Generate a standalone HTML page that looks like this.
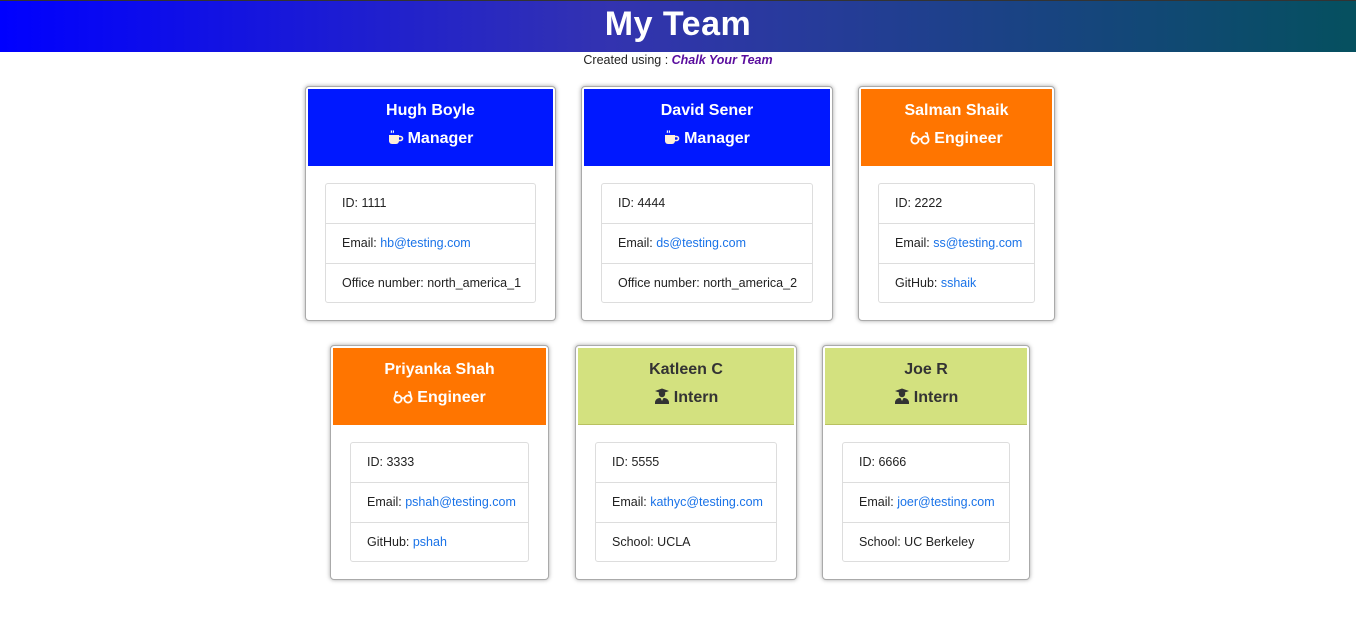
<!DOCTYPE html>
<html><head><style>
*{box-sizing:border-box;margin:0;padding:0}
body{width:1356px;height:618px;background:#fff;font-family:"Liberation Sans",sans-serif;position:relative;overflow:hidden}
.top{position:absolute;left:0;top:0;width:1356px;height:52px;background:linear-gradient(90deg,#0000ff 0%,#3333b0 45%,#05505f 100%);border-top:1px solid #333}
.top h1{text-align:center;color:#fff;font-size:34px;line-height:46px;font-weight:bold;letter-spacing:0.5px}
.sub{position:absolute;top:53px;left:0;width:1356px;text-align:center;font-size:12.5px;line-height:15px;color:#222}
.sub b{color:#5a0e9e;font-style:italic;font-weight:900}
.card{position:absolute;height:235px;border:1px solid #aaa;border-radius:4px;box-shadow:0 0 4px rgba(0,0,0,.35);padding:2px;background:#fff}
.hd{height:77px;text-align:center;color:#fff;font-family:"Liberation Sans",sans-serif;font-weight:bold;font-size:16px;padding-top:8px;line-height:28px}
.hd svg{vertical-align:-2px;margin-right:4px}
.m{background:#0018ff}.e{background:#ff7500}.i{background:#d3e17f;color:#333;border-bottom:1px solid #b8c160}
.ls{position:absolute;left:19px;right:19px;top:96px;border:1px solid #ddd;border-radius:3px;font-size:12.5px;color:#222}
.ls div{height:39.3px;line-height:39px;padding-left:16px;border-top:1px solid #ddd;white-space:nowrap}
.ls div:first-child{border-top:none}
.ls a{color:#1a73e8;text-decoration:none}
</style></head><body>
<div class="top"><h1>My Team</h1></div>
<div class="sub">Created using : <b>Chalk Your Team</b></div>
<svg width="0" height="0" style="position:absolute">
<defs>
<symbol id="mug" viewBox="0 0 16 16"><path d="M3 1.5q1 1.2 0 2.4M5 1.5q1 1.2 0 2.4" stroke="#fff" stroke-width="1" fill="none"/><path d="M1 6h10v6a3 3 0 0 1-3 3H4a3 3 0 0 1-3-3z" fill="#fdeed9"/><path d="M11 7.5h1.5a2 2 0 0 1 0 4H11" stroke="#fdeed9" stroke-width="1.6" fill="none"/></symbol>
<symbol id="gl" viewBox="0 0 20 14"><circle cx="5" cy="9" r="3.6" stroke="#fff" stroke-width="1.8" fill="none"/><circle cx="15" cy="9" r="3.6" stroke="#fff" stroke-width="1.8" fill="none"/><path d="M8.5 8h3M1.5 8.5L3 2h2M18.5 8.5L17 2h-2" stroke="#fff" stroke-width="1.6" fill="none"/></symbol>
<symbol id="gr" viewBox="0 0 16 16"><path d="M1 3L8 0.5 15 3 8 5.5z" fill="#333"/><circle cx="8" cy="6" r="3.2" fill="#333"/><path d="M1 16v-1.5a4.5 4.5 0 0 1 4.5-4.5h5a4.5 4.5 0 0 1 4.5 4.5V16z" fill="#333"/><path d="M6.5 10l1.5 3 1.5-3" fill="#d3e17f"/></symbol>
</defs></svg>

<div class="card" style="left:305px;top:86px;width:251px"><div class="hd m">Hugh Boyle<br><svg width="16" height="16"><use href="#mug"/></svg>Manager</div><div class="ls"><div>ID: 1111</div><div>Email: <a>hb@testing.com</a></div><div>Office number: north_america_1</div></div></div>
<div class="card" style="left:581px;top:86px;width:252px"><div class="hd m">David Sener<br><svg width="16" height="16"><use href="#mug"/></svg>Manager</div><div class="ls"><div>ID: 4444</div><div>Email: <a>ds@testing.com</a></div><div>Office number: north_america_2</div></div></div>
<div class="card" style="left:858px;top:86px;width:197px"><div class="hd e">Salman Shaik<br><svg width="20" height="14"><use href="#gl"/></svg>Engineer</div><div class="ls"><div>ID: 2222</div><div>Email: <a>ss@testing.com</a></div><div>GitHub: <a>sshaik</a></div></div></div>

<div class="card" style="left:330px;top:345px;width:219px"><div class="hd e">Priyanka Shah<br><svg width="20" height="14"><use href="#gl"/></svg>Engineer</div><div class="ls"><div>ID: 3333</div><div>Email: <a>pshah@testing.com</a></div><div>GitHub: <a>pshah</a></div></div></div>
<div class="card" style="left:575px;top:345px;width:222px"><div class="hd i">Katleen C<br><svg width="16" height="16"><use href="#gr"/></svg>Intern</div><div class="ls"><div>ID: 5555</div><div>Email: <a>kathyc@testing.com</a></div><div>School: UCLA</div></div></div>
<div class="card" style="left:822px;top:345px;width:208px"><div class="hd i">Joe R<br><svg width="16" height="16"><use href="#gr"/></svg>Intern</div><div class="ls"><div>ID: 6666</div><div>Email: <a>joer@testing.com</a></div><div>School: UC Berkeley</div></div></div>
</body></html>
